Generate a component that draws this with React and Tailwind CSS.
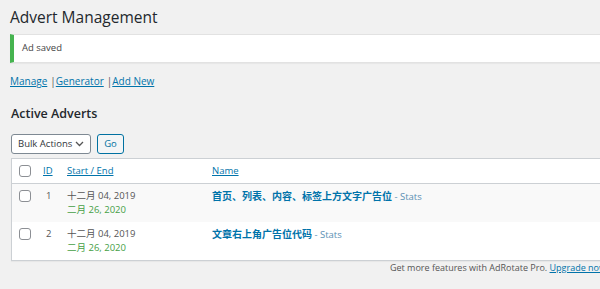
const ADVERTS = [
  { id: 1, start: '十二月 04, 2019', end: '二月 26, 2020', name: '首页、列表、内容、标签上方文字广告位' },
  { id: 2, start: '十二月 04, 2019', end: '二月 26, 2020', name: '文章右上角广告位代码' },
]

function Checkbox() {
  return <span className="block h-[12px] w-[12px] rounded-[3px] border border-[#8c8f94] bg-white" />
}

export default function App() {
  return (
    <div
      className="h-[289px] w-[600px] overflow-hidden bg-[#f1f1f1] text-[10px] text-[#444]"
      style={{ fontFamily: '"Open Sans", "Noto Sans CJK SC", sans-serif' }}
    >
      <div className="w-[606px] pl-[10px]">
        <h1 className="pt-[5px] text-[15.5px] leading-[24px] text-[#23282d]">Advert Management</h1>

        <div className="mt-[5px] flex h-[29px] items-center border border-l-4 border-[#e2e2e2] border-l-[#46b450] bg-white pl-[8px] shadow-[0_1px_1px_rgba(0,0,0,0.04)]">
          <span className="text-[9.5px] text-[#444]">Ad saved</span>
        </div>

        <div className="mt-[10px] flex items-center text-[10px] leading-[16px] text-[#0073aa]">
          <a className="underline">Manage</a>
          <span className="ml-[3px] text-[#555]">|</span>
          <a className="underline">Generator</a>
          <span className="ml-[3px] text-[#555]">|</span>
          <a className="underline">Add New</a>
        </div>

        <h2 className="mt-[16px] pl-px text-[12.5px] font-semibold leading-[18px] text-[#23282d]">Active Adverts</h2>

        <div className="mt-[11px] flex items-center gap-[6px] pl-px">
          <div className="flex h-[20px] w-[80px] items-center justify-between whitespace-nowrap rounded-[3px] border border-[#7e8993] bg-white pl-[6px] pr-[6px] text-[9.5px] text-[#32373c]">
            <span>Bulk Actions</span>
            <svg width="9" height="6" viewBox="0 0 9 6" fill="none" stroke="#555" strokeWidth="1.3">
              <path d="M1 1l3.5 3.5L8 1" />
            </svg>
          </div>
          <button className="flex h-[20px] w-[27px] items-center justify-center rounded-[3px] border border-[#0071a1] bg-[#f3f5f6] text-[9.5px] text-[#0071a1]">
            Go
          </button>
        </div>

        <div className="mt-[4px] ml-px border border-[#ccd0d4] bg-white shadow-[0_1px_1px_rgba(0,0,0,0.04)]">
          <div className="flex h-[25px] items-center border-b border-[#ccd0d4] text-[9.5px] text-[#0073aa]">
            <div className="w-[31px] pl-[7px]">
              <Checkbox />
            </div>
            <div className="w-[24px] underline">ID</div>
            <div className="w-[145px] underline">Start / End</div>
            <div className="underline">Name</div>
          </div>
          {ADVERTS.map((a, i) => (
            <div
              key={a.id}
              className={`flex h-[38px] items-start pt-[5px] ${i % 2 === 0 ? 'bg-[#f9f9f9]' : 'bg-white'}`}
            >
              <div className="w-[31px] pl-[7px] pt-[1px]">
                <Checkbox />
              </div>
              <div className="w-[24px] pl-[3px] text-[9.5px] leading-[14px] text-[#555]">{a.id}</div>
              <div className="w-[145px] text-[9.5px] leading-[14px]">
                <div className="text-[#555]">{a.start}</div>
                <div className="text-[#46a046]">{a.end}</div>
              </div>
              <div className="leading-[14px]">
                <span className="text-[10px] font-bold text-[#0073aa]">{a.name}</span>
                <span className="text-[9.5px] text-[#5b8fb4]"> - Stats</span>
              </div>
            </div>
          ))}
        </div>

        <div className="mt-0 whitespace-nowrap text-right text-[9px] leading-[14px] text-[#555]">
          Get more features with AdRotate Pro. <a className="text-[#0073aa] underline">Upgrade now</a>
        </div>
      </div>
    </div>
  )
}
